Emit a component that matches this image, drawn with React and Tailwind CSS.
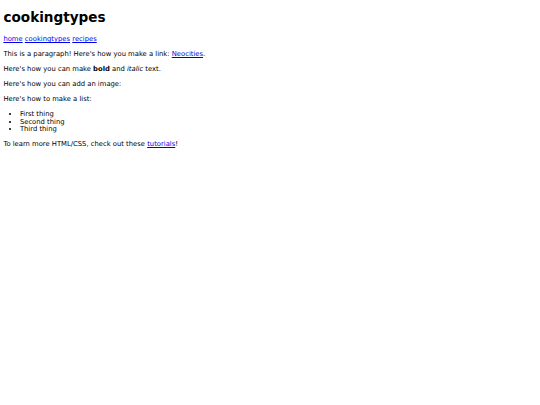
import React from "react";

const App = () => {
  return (
    <div className="m-[3.4px] text-[6.8px] leading-[7.5px] text-black bg-white font-['DejaVu_Sans',sans-serif]">
      <h1 className="text-[13.6px] leading-[normal] font-bold mt-[9.1px] mb-[11px]">cookingtypes</h1>
      <p className="my-[7.5px]">
        <a href="#" className="text-[#0000ee] underline">home</a>{" "}
        <a href="#" className="text-[#0000ee] underline">cookingtypes</a>{" "}
        <a href="#" className="text-[#0000ee] underline">recipes</a>
      </p>
      <p className="my-[7.5px]">
        This is a paragraph! Here's how you make a link:{" "}
        <a href="#" className="text-[#0000ee] underline">Neocities</a>.
      </p>
      <p className="my-[7.5px]">
        Here's how you can make <strong className="font-bold">bold</strong> and <em className="italic">italic</em> text.
      </p>
      <p className="my-[7.5px]">Here's how you can add an image:</p>
      <p className="my-[7.5px]">Here's how to make a list:</p>
      <ul className="list-disc pl-[16.5px] my-[7.5px]">
        <li>First thing</li>
        <li>Second thing</li>
        <li>Third thing</li>
      </ul>
      <p className="my-[7.5px]">
        To learn more HTML/CSS, check out these{" "}
        <a href="#" className="text-[#0000ee] underline">tutorials</a>!
      </p>
    </div>
  );
};

export default App;
